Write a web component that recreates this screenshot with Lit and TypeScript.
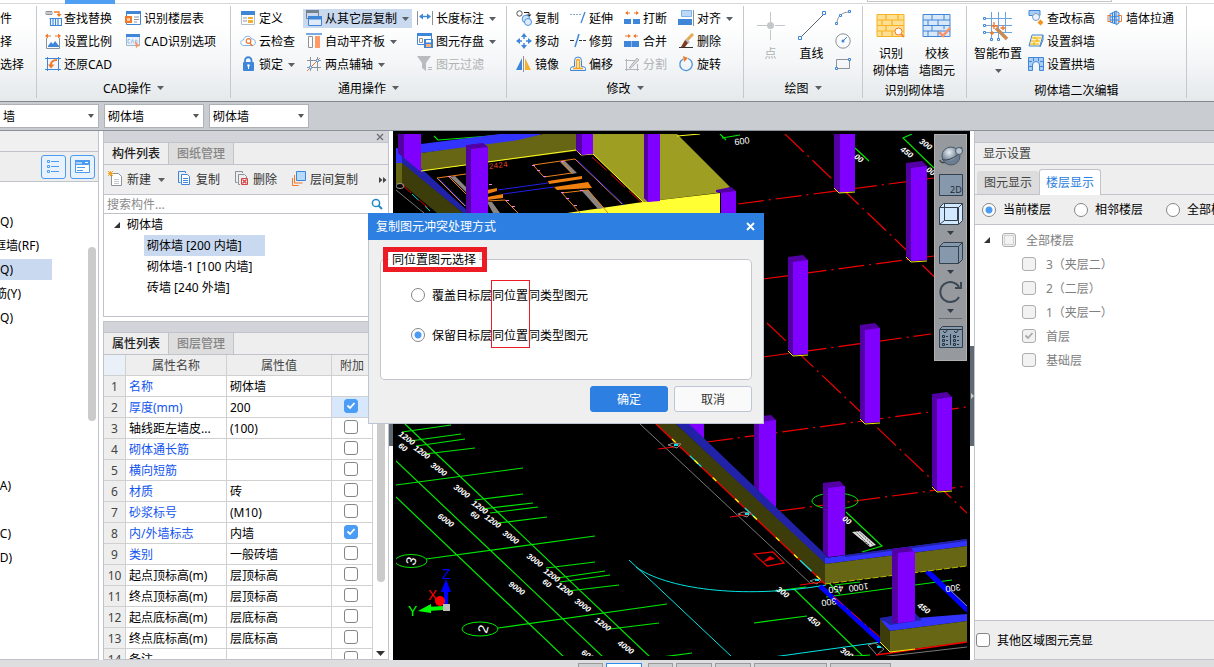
import { LitElement, html, css, svg, nothing } from "lit";
import { customElement } from "lit/decorators.js";
import { classMap } from "lit/directives/class-map.js";
import { styleMap } from "lit/directives/style-map.js";

const B = "#3f86d8";
const O = "#f0792a";
const G = "#8b9299";

const icons: Record<string, unknown> = {
  findReplace: svg`<path d="M1 1.500h6v3H1zM3 1v4M5 1v4" fill="none" stroke=${G}/><path d="M9 2h5v3" fill="none" stroke=${O} stroke-width="1.300"/><path d="M11.500 4h5L14 7z" fill=${O}/><path d="M5.500 8.500h11v7h-11zM4.500 8.500h12M8 9v6M10.500 9v6M13 9v6" fill="none" stroke=${B} stroke-width="1.200"/>`,
  scale: svg`<path d="M1 3h5M10 3h5" stroke=${O}/><path d="M0 3l3-2.500v5zM16 3l-3-2.500v5z" fill=${O}/><path d="M1.500 5v10.500h13V5" fill="none" stroke=${G}/><path d="M3 13l3-4 2 2 2-3 4 5v1H3z" fill=${B}/>`,
  restore: svg`<path d="M2.500 1v14M13.500 1v14M0 2.500h16M0 13.500h16" stroke=${B} fill="none"/><path d="M6 11c-1-5 2-7 6-7" fill="none" stroke=${O} stroke-width="2"/><path d="M3 8.500h6.500L6 12.500z" fill=${O}/>`,
  floorTable: svg`<path d="M1.500 1.500h14v13h-14z" fill="#fff" stroke=${B}/><path d="M1 1h15v3H1z" fill=${B}/><path d="M0 6h7v7H0z" fill=${O}/><path d="M2 8h3v3H2z" fill="#ffd2b0"/><path d="M9 7h5M9 9.500h5M9 12h3" stroke=${G}/>`,
  cadOpts: svg`<path d="M1.500 1.500h13v11h-13z" fill="#e9f2fc" stroke="#9db6cf"/><path d="M1 1h14v3H1z" fill=${B}/><path d="M5 6.500H3v3.500h2M6 10.500l1.500-4 1.500 4M10.500 7v3h1q1.500-1.500 0-3z" fill="none" stroke="#8fb4dc" stroke-width=".8"/><path d="M10 8l5 5-2.500.5-1.500 2z" fill="#f79468"/>`,
  define: svg`<path d="M1.500 1.500h13v13h-13z" fill="#fff" stroke="#b4bec8"/><path d="M1 1h14v4H1z" fill=${B}/><path d="M3 8h4M3 11h4" stroke=${G}/><path d="M8 7h5v2H8zM8 10h5v3H8z" fill="#f5b12d"/>`,
  cloud: svg`<path d="M4 12.500C-.5 12.500 0 7 3.500 7 4 2.500 10.500 2 11.500 6c5-.5 5 6.500 1 6.500z" fill="#fff" stroke="#7db1ea"/><circle cx="8.500" cy="8" r="2.300" fill="none" stroke=${O} stroke-width="1.200"/><path d="M10 10l2.500 3" stroke=${O} stroke-width="1.300"/>`,
  lock: svg`<path d="M5 7V4.500a3 3 0 0 1 6.500 0V7" fill="none" stroke=${B} stroke-width="1.800"/><rect x="3" y="6" width="11" height="9" rx="1" fill=${B}/><circle cx="8.500" cy="9.500" r="1.300" fill="#fff"/><path d="M8 10h1v3H8z" fill="#fff"/>`,
  copyLayer: svg`<path d="M.5.500h12v8H.5z" fill="#c9daf0" stroke="#75828e"/><path d="M0 0h13v3H0z" fill="#75828e"/><path d="M2.500 6.500h13v9h-13z" fill="#dfeafa" stroke=${B}/><path d="M2 6h14v3.500H2z" fill=${B}/>`,
  slab: svg`<path d="M0 1h16" stroke=${B} stroke-width="1.400"/><path d="M2.500 3.500h4v11h-4z" fill="#fff" stroke=${G}/><path d="M9 3h5v12H9z" fill="#ff9a66"/>`,
  auxAxis: svg`<path d="M4.500 1v14M11.500 1v14M1 4.500h14M1 11.500h14" stroke=${G}/><path d="M1 15L14 2" stroke=${O}/><circle cx="4.500" cy="11.500" r="1.300" fill="#fff" stroke=${B}/><circle cx="11.500" cy="4.500" r="1.300" fill="#fff" stroke=${B}/>`,
  dimension: svg`<path d="M.5 1v14M15.500 1v14" stroke=${G}/><path d="M3 6.500h10" stroke=${B} stroke-width="1.400"/><path d="M2 6.500l4-3v6zM14 6.500l-4-3v6z" fill=${B}/>`,
  saveElem: svg`<path d="M.5.500h14v11H.5z" fill="#fff" stroke=${B}/><path d="M0 0h15v3H0z" fill=${B}/><path d="M2.500 5.500h3v4h-3z" fill="none" stroke=${G}/><path d="M7 6h9v9H7z" fill=${B}/><path d="M9 7h5v2.500H9z" fill="#fff"/><path d="M9 11h5v3H9z" fill="#ffb070"/>`,
  filter: svg`<path d="M0 0h14L9 7v8l-4-3V7z" fill="#b9bcbf"/><path d="M11 11.500h4M11 13.500h4" stroke="#b9bcbf"/>`,
  copy: svg`<circle cx="3.500" cy="3.500" r="2.700" fill="#fff" stroke="#555"/><path d="M8 2.500h5v2" fill="none" stroke="#222"/><path d="M10.500 4.500h5L13 7z" fill="#222"/><circle cx="10" cy="9" r="3.800" fill="#cfe4fb" stroke="#4e93da"/><circle cx="12" cy="12" r="3.500" fill="#dcecfc" stroke="#4e93da"/>`,
  move: svg`<path d="M8 0l3 4H5zM8 16l3-4H5zM0 8l4-3v6zM16 8l-4-3v6z" fill=${B}/><path d="M8 3v3M8 10v3M3 8h3M10 8h3" stroke=${B} stroke-width="1.400"/>`,
  mirror: svg`<path d="M6 2v12H0z" fill=${B}/><path d="M7.500 0v16" stroke=${G}/><path d="M9 2v12h6z" fill="#f5b12d"/>`,
  extend: svg`<path d="M0 4.500h11" stroke="#7fa9d6" stroke-dasharray="2 1"/><path d="M15 2L11 13" stroke=${B} stroke-width="1.300"/>`,
  trim: svg`<path d="M0 7.500h4" stroke="#333"/><path d="M9 7.500h7" stroke="#333" stroke-dasharray="3 1"/><path d="M9 1L5 14" stroke=${B} stroke-width="1.500"/>`,
  offset: svg`<path d="M.5 14.500h15v-2q0-2-4-2V4.500a3.500 3.500 0 0 0-7 0v6q-4 0-4 2z" fill="none" stroke=${B}/><path d="M3 12.500h10M6.500 12V5a1.500 1.500 0 0 1 3 0v7" fill="none" stroke="#f5a51d" stroke-width="1.500"/>`,
  breakIt: svg`<path d="M0 9h7v5H0zM9 9h7v5H9z" fill=${B}/><path d="M3 3h3M10 3h3" stroke=${O}/><path d="M1 3l3-2v4zM15 3l-3-2v4z" fill=${O}/>`,
  merge: svg`<path d="M0 8h15v6H0z" fill=${B}/><path d="M7.500 8v6" stroke="#8fbcf0"/><path d="M1 3h4M10 3h4" stroke=${O}/><path d="M7 3L4 1v4zM9 3l3-2v4z" fill=${O}/>`,
  split: svg`<path d="M1 4.500h10M1 13.500h14M2.500 3v12M13.500 8v7" stroke="#b3b6b9"/><path d="M5 12L13 2l2 2-8 8z" fill="#d5d6d8" stroke="#b3b6b9"/>`,
  align: svg`<path d="M3.500.500h10v6h-10z" fill="#bcd8f7" stroke="#7fb0e6"/><path d="M0 9h14v6H0z" fill=${B}/><path d="M15.500 0v16" stroke=${G}/>`,
  erase: svg`<path d="M15 1L8 8" stroke="#e5a95a" stroke-width="3"/><path d="M9 6l3 3-2 2-3-3z" fill="#bbb"/><path d="M7 7l3 3-3 4H3z" fill="#7d3a22"/><path d="M1 14.500h14" stroke="#333"/>`,
  rotate: svg`<path d="M10 2.500a6.200 6.200 0 1 1-5 .5" fill="none" stroke="#4e93da" stroke-width="1.300"/><path d="M5 0l5 2-4 4z" fill=${O}/>`,
  arc: svg`<path d="M2 13C2 7 7 2 14 2" fill="none" stroke=${G}/><path d="M.5 12.500h2v2h-2zM4.500 4.500h2v2h-2zM13.500.500h2v2h-2z" fill="#fff" stroke=${B}/>`,
  circle: svg`<circle cx="8" cy="8" r="7.200" fill="none" stroke=${G}/><path d="M8 8l4-4" stroke=${B}/><circle cx="8" cy="8" r="1.500" fill=${B}/>`,
  rect: svg`<path d="M1.500 3.500h13v9h-13z" fill="none" stroke=${G}/><path d="M.5 11.500h2v2h-2zM13.500 2.500h2v2h-2z" fill="#fff" stroke=${B}/>`,
  elevation: svg`<path d="M1 .5h11v5H9l-2 3-2-3H1z" fill="#a9cdf4" stroke=${B}/><circle cx="8" cy="7" r="3.500" fill="#eaf3fc" stroke="#7a9cc0"/><path d="M12.500 9.500l3 3-3 3-3-3z" fill="#f5911d"/>`,
  slope: svg`<path d="M4 2h11l-3 11H1z" fill="#fff3c8" stroke=${B}/><path d="M4 5h9M3 8h9M2 11h9M7 4v2M9 6v3M6 9v3" stroke="#f0b000" stroke-width="1.200"/><path d="M15 2v5l-3 7" fill="none" stroke=${B}/>`,
  arch: svg`<path d="M.5 1.500h15v13h-4V9a3.500 3.500 0 0 0-7 0v5.500h-4z" fill="#a9cdf4" stroke=${B}/><path d="M0 5.500h4M0 10.500h4M12 5.500h4M12 10.500h4M5.500 1v4M10.500 1v4" stroke=${B}/>`,
  through: svg`<path d="M3 4l6-3v13l-6-2zM9 1l3 2v10l-3 2" fill="#cfe4fb" stroke=${B}/><path d="M5.500 3v10M7.500 2v11M3 7l9-1M3 10h9" stroke=${B}/><path d="M1 5.500h3M1 5v7M1 11.500h3M11 5.500h3.500v6H11" fill="none" stroke=${O}/>`,
  newItem: svg`<path d="M3.500 2.500h7l3 3v9h-10z" fill="#fff" stroke=${G}/><path d="M6 8.500h5M6 10.500h5M6 12.500h5" stroke="#c5c9cd"/><path d="M2.500 0v5M0 2.500h5M0 0l5 5M5 0L0 5" stroke="#f5a51d"/>`,
  copyDoc: svg`<path d="M8.500 2V.5h-7v11h2" fill="none" stroke=${B}/><path d="M4.500 3.500h6l2 2v8h-8z" fill="#fff" stroke=${B}/><path d="M6 7.500h5M6 9.500h5M6 11.500h5" stroke=${B}/>`,
  delDoc: svg`<path d="M8.500 2V.5h-7v11h2" fill="none" stroke=${G}/><path d="M6 13.500H4.500v-10h6l2 2V7" fill="none" stroke=${G}/><path d="M7.500 7.500h6v6h-6z" fill="#fff" stroke="#d04545"/><path d="M8.500 8.500l4 4M12.500 8.500l-4 4" stroke="#d04545" stroke-width="1.400"/>`,
  layerCopy: svg`<path d="M5.500.500h9v9h-9z" fill="#b6dafc" stroke=${B}/><path d="M3.500 4v8h8" fill="none" stroke=${O}/><path d="M1.500 7v7.500h6" fill="none" stroke=${O}/>`,
};

const big: Record<string, unknown> = {
  point: svg`<path d="M14.500 1v10M14.500 19v10M1 14.500h10M19 14.500h10" stroke="#c4c7c9"/><circle cx="14.500" cy="14.500" r="3.500" fill="#c4c7c9"/>`,
  line: svg`<path d="M4 26L26 4" stroke="#596570"/><path d="M1.500 25.500h3v3h-3zM25.500.500h3v3h-3z" fill="#fff" stroke=${B}/>`,
  brick: svg`<path d="M1 3.500h27v22H1z" fill="#ffdf94" stroke="#f5b31f"/><path d="M1 9h27M1 14.500h27M1 20h27M10 3v6M22 3v6M6 9v5.500M16 9v5.500M10 14.500V20M6 20v5M16 20v5" stroke="#f5b31f" stroke-width="1.200"/><circle cx="22.500" cy="20.500" r="3.500" fill="#fff" stroke=${O}/><path d="M25 23l3 3" stroke=${O} stroke-width="1.500"/>`,
  check: svg`<path d="M1 3.500h27v22H1z" fill="#d9e8f8" stroke=${B}/><path d="M1 9h27M1 14.500h27M1 20h27M10 3v6M22 3v6M6 9v5.500M16 9v5.500M10 14.500V20M6 20v5M16 20v5M22 14.500V18" stroke=${B}/><path d="M17 21l4 4 7-8" fill="none" stroke="#f79468" stroke-width="2.500"/>`,
  smart: svg`<path d="M8.500 1v26M15.500 1v26M22.500 1v20M2 7.500h27M2 14.500h27M2 21.500h27" stroke="#6ba4e2"/><path d="M.5 6.500h2v2h-2zM.5 13.500h2v2h-2zM.5 20.500h2v2h-2zM7.500 27.500h2v2h-2zM14.500 27.500h2v2h-2z" fill="#fff" stroke=${B}/><path d="M13 17l11 11" stroke="#c98a54" stroke-width="3.500"/><path d="M11 11v7M8 15h7M20 14v5M17.500 17h5M9 20v4M7 22h4" stroke=${O} stroke-width="1.300"/>`,
};

const ico = (name: string) => html`<svg class="ico" width="17" height="17" viewBox="0 0 17 17" aria-hidden="true">${icons[name]}</svg>`;
const caret = html`<svg class="caret" width="7" height="4" viewBox="0 0 7 4" aria-hidden="true"><path d="M0 0h7L3.500 4z" fill="#5b5f63"/></svg>`;

interface Cmd { t?: string; i?: string; drop?: boolean; off?: boolean; on?: boolean }
const cmd = (c: Cmd) => html`<button class=${classMap({ cmd: true, on: !!c.on })} ?disabled=${!!c.off} aria-label=${c.t ? nothing : c.i}>
  ${c.i ? ico(c.i) : nothing}${c.t ? html`<span>${c.t}</span>` : nothing}${c.drop ? caret : nothing}</button>`;
const bigCmd = (name: string, lines: string[], drop = false, off = false) => html`<button class="big" ?disabled=${off}>
  <svg width="30" height="30" viewBox="0 0 30 30" aria-hidden="true">${big[name]}</svg>
  ${lines.map((l) => html`<span>${l}</span>`)}${drop ? html`<span>${caret}</span>` : nothing}</button>`;

const cadCmds: Cmd[] = [
  { t: "查找替换", i: "findReplace" }, { t: "识别楼层表", i: "floorTable" },
  { t: "设置比例", i: "scale" }, { t: "CAD识别选项", i: "cadOpts" },
  { t: "还原CAD", i: "restore" },
];
const commonCmds: Cmd[] = [
  { t: "定义", i: "define" }, { t: "从其它层复制", i: "copyLayer", drop: true, on: true }, { t: "长度标注", i: "dimension", drop: true },
  { t: "云检查", i: "cloud" }, { t: "自动平齐板", i: "slab", drop: true }, { t: "图元存盘", i: "saveElem", drop: true },
  { t: "锁定", i: "lock", drop: true }, { t: "两点辅轴", i: "auxAxis", drop: true }, { t: "图元过滤", i: "filter", off: true },
];
const editCmds: Cmd[] = [
  { t: "复制", i: "copy" }, { t: "延伸", i: "extend" }, { t: "打断", i: "breakIt" }, { t: "对齐", i: "align", drop: true },
  { t: "移动", i: "move" }, { t: "修剪", i: "trim" }, { t: "合并", i: "merge" }, { t: "删除", i: "erase" },
  { t: "镜像", i: "mirror" }, { t: "偏移", i: "offset" }, { t: "分割", i: "split", off: true }, { t: "旋转", i: "rotate" },
];

interface Prop { n: string; v: string; blue?: boolean; c?: boolean | null }
const props: Prop[] = [
  { n: "名称", v: "砌体墙", blue: true, c: null },
  { n: "厚度(mm)", v: "200", blue: true, c: true },
  { n: "轴线距左墙皮...", v: "(100)" },
  { n: "砌体通长筋", v: "", blue: true },
  { n: "横向短筋", v: "", blue: true },
  { n: "材质", v: "砖", blue: true },
  { n: "砂浆标号", v: "(M10)", blue: true },
  { n: "内/外墙标志", v: "内墙", blue: true, c: true },
  { n: "类别", v: "一般砖墙", blue: true },
  { n: "起点顶标高(m)", v: "层顶标高" },
  { n: "终点顶标高(m)", v: "层顶标高" },
  { n: "起点底标高(m)", v: "层底标高" },
  { n: "终点底标高(m)", v: "层底标高" },
  { n: "备注", v: "" },
];

// Label text with the visible extent left by the horizontal scroll of the tree.
const navRows: [string, number][] = [
  ["Q)", 13], ["框墙(RF)", 39], ["Q)", 13], ["筋(Y)", 21], ["Q)", 13], ["", 0], ["", 0], ["", 0],
  ["", 0], ["", 0], ["", 0], ["A)", 11], ["", 0], ["C)", 11], ["D)", 12],
];

// Column prism in the model view: left, right, top and bottom edges.
const pillar = (x: number, r: number, top: number, bottom: number, side = 5) => svg`
  <path d="M${x} ${top + 2}L${r - 5} ${top}L${r} ${top + 5}V${bottom - 1}L${x + side} ${bottom}L${x} ${bottom - 5}z" fill="#5200a3"/>
  <path d="M${x + side} ${top + 7}L${r} ${top + 5}V${bottom - 1}L${x + side} ${bottom}z" fill="#8000ff"/>`;
const foot = (x: number, r: number, y: number) => svg`<path d="M${x} ${y - 5}L${x + 5} ${y}L${r} ${y - 1}" fill="none" stroke="#e8e800"/>`;

const dims: [number, number, string][] = [
  [407, 438, "1200"], [403, 447, "60"], [422, 452, "1200"], [439, 469, "3000"], [462, 491, "3000"], [480, 507, "1200"],
  [475, 515, "60"], [493, 521, "1200"], [511, 537, "3000"], [535, 560, "3000"], [552, 575, "1200"], [547, 583, "60"],
  [565, 589, "1200"], [583, 605, "3000"], [603, 624, "1200"], [626, 647, "4000"], [446, 520, "6000"], [517, 588, "9000"],
  [588, 655, "600"], [907, 152, "450"], [926, 144, "300"], [859, 158, "00"], [931, 171, "00"], [783, 592, "300"],
  [814, 621, "450"], [847, 653, "300"], [924, 608, "450"], [847, 520, "00"],
];

const greens = [
  "M405 424L650 657", "M396 461L603 657", "M396 497L564 657", "M396 485L523 468", "M426 559L595 536", "M498 628L667 604",
  "M402 432L451 425", "M410 441L461 434", "M416 446L465 439", "M425 454L475 448", "M475 500L523 494", "M482 509L533 503",
  "M490 513L538 507", "M498 523L547 517", "M546 568L595 562", "M557 578L605 571", "M560 582L610 575", "M568 591L619 585",
  "M610 629L659 623", "M662 657L692 653", "M754 623L807 616", "M794 589L864 657", "M775 591L806 587", "M826 597L952 580",
  "M835 585L860 582", "M829 583L840 594", "M846 512L882 546L862 552", "M855 148L869 161", "M912 134L903 138L934 168",
  "M434 136L438 140L503 135", "M720 134L726 140M722 138L740 135", "M843 657L870 655",
];

const scene = svg`
<g clip-path="url(#view)">
  <g fill="none" stroke="#f00000" stroke-width="1.200" stroke-dasharray="26 5 2 5">
    <path d="M785 134L967 308"/><path d="M738 204L934 178"/><path d="M763 279L934 256"/><path d="M763 357L931 334"/>
    <path d="M767 323L967 513"/><path d="M707 442L967 407"/><path d="M779 511L967 486"/>
  </g>
  <path d=${greens.join("")} fill="none" stroke="#00e800" stroke-width="1.200"/>
  <g fill="none" stroke="#00e800"><ellipse cx="411" cy="561" rx="16" ry="6.500"/><ellipse cx="480" cy="629" rx="18" ry="7"/><ellipse cx="835" cy="501" rx="23" ry="8"/></g>
  <g fill="none" stroke="#00e5e5"><path d="M629 560L732 657"/><path d="M636 567C665 588 740 600 826 585"/><path d="M773 657L881 642"/></g>
  <path d="M421 144L500 134H540L543 139L421 153z" fill="#3333ff"/>
  <path d="M421 153L543 137L576 134V151L421 171z" fill="#666614"/>
  <path d="M543 134H576V135L543 139L510 142z" fill="#666614"/>
  <path d="M396 148L421 152V170L402 163H396z" fill="#3333ff"/>
  <path d="M396 163H402V184H396z" fill="#666614"/>
  <path d="M402 155L412 160L470 213H463L402 164z" fill="#2222a8"/>
  <path d="M402 163L463 213H437L402 184z" fill="#3d3d0c"/>
  <path d="M593 134H677L730 187L717 193L643 202L593 154z" fill="#9e9e22"/>
  <path d="M567 213L643 202L720 193V213z" fill="#ffff33"/>
  <path d="M421 171L576 150L581 155L593 154L643 202M677 136L700 134" fill="none" stroke="#ffff20"/>
  <path d="M592 157L641 202" stroke="#e00000" stroke-dasharray="20 5"/>
  <path d="M450 177L455 176L466 187V192zM560 162L565 161L577 173L572 174zM582 191L588 190L604 208L598 209zM487 202H492L500 213H493z" fill="#8c8480"/>
  <g fill="none" stroke="#e8801c"><path d="M466 174L437 178L465 206M441 181L463 203M449 177L466 194"/><path d="M533 165L575 159L622 204M533 165L544 177L572 173L562 162"/><path d="M562 193L588 190L608 213M562 193L580 213M487 201L505 200L518 213"/></g>
  <g stroke="#2020e8"><path d="M498 190L548 183M503 194L554 187M577 160L624 205M439 179L466 206"/></g>
  <path d="M548 181L582 176V179L549 184zM554 187L588 182L592 188L557 190zM487 190L497 188V191L487 194zM487 197L503 194V198L487 200z" fill="#f08010"/>
  <path d="M532 165h3v1h-3zM537 170h3v1h-3zM543 176h3v1h-3zM561 161h3v1h-3zM561 192h3v1h-3zM566 198h3v1h-3zM574 205h3v1h-3zM448 176h3v1h-3zM489 184h3v1h-3zM506 200h3v1h-3zM512 206h3v1h-3zM580 190h3v1h-3z" fill="#f080f0"/>
  <text x="489" y="169" class="red" transform="rotate(-7 489 169)">2424</text>
  <path d="M396 190L424 213" stroke="#777"/><path d="M402 185L434 213" stroke="#f00000" stroke-dasharray="12 10"/><path d="M412 194L430 211" stroke="#00e5e5" stroke-dasharray="9 9"/>
  <ellipse cx="400" cy="186" rx="4" ry="2.500" fill="none" stroke="#999"/>
  <path d="M398 134H421V172L404 158L398 150z" fill="#8000ff"/><path d="M398 134H404V158L398 153z" fill="#5200a3"/>
  <path d="M466 145L483 143L488 147V213H466z" fill="#5200a3"/><path d="M471 149L488 147V213H471z" fill="#8000ff"/>
  <path d="M576 134H593V154L582 155L576 150z" fill="#8000ff"/><path d="M576 134H582V155L576 150z" fill="#5200a3"/>
  <path d="M644 134H660V201L648 202L644 198z" fill="#8000ff"/><path d="M644 134H648V202L644 198z" fill="#5200a3"/>
  <path d="M716 190L731 187L736 191V213H721V193L716 192z" fill="#5200a3"/><path d="M721 193L736 191V213H721z" fill="#8000ff"/>
  <path d="M834 134H855V191L840 193L834 187z" fill="#8000ff"/><path d="M834 134H840V193L834 187z" fill="#5200a3"/>
  ${foot(834, 855, 193)}
  ${pillar(906, 927, 161, 261)}${foot(906, 927, 262)}
  ${pillar(788, 808, 255, 355)}${foot(788, 808, 356)}
  ${pillar(860, 880, 323, 423)}${foot(860, 880, 424)}
  ${pillar(932, 952, 392, 491)}${foot(932, 952, 492)}
  ${pillar(754, 776, 415, 511)}
  <path d="M685 424H704V440z" fill="#8000ff"/>
  <path d="M676 424H689L828 557L825 564z" fill="#2222a8"/>
  <path d="M656 424H676L825 563V584z" fill="#3d3d0c"/>
  <path d="M640 424L811 584" stroke="#777"/>
  <path d="M656 424L825 584" stroke="#f00000" stroke-width="1.300"/>
  <path d="M668 435L825 584" stroke="#00e5e5" stroke-width="1.300" stroke-dasharray="0 30 16 30"/>
  <path d="M672 439L825 584" stroke="#ffff00" stroke-width="1.300" stroke-dasharray="5 26 5 20"/>
  <g fill="none" stroke="#888"><path d="M738 514l5-2 8 1-4 4zM668 445l5-2 8 1-4 4zM810 581l5-2 6 1-4 4zM868 645l7-2 9 6-7 6z"/></g>
  <path d="M730 517L752 514M658 449L674 447M800 585L822 582M754 554L773 552L784 563L767 566z" fill="none" stroke="#f00000" stroke-width="1.200"/>
  <path d="M770 556L775 559L763 562z" fill="#f00000"/>
  <path d="M745 513h4v2h-4zM674 444h4v2h-4zM815 579h4v2h-4zM877 646h4v2h-4z" fill="#00e5e5"/>
  <path d="M820 586L881 642" stroke="#0000ff" stroke-width="5"/><path d="M833 596L881 638" stroke="#f00000" stroke-dasharray="14 4 2 4"/>
  <path d="M927 571L969 611" stroke="#0000ff" stroke-width="5.500"/><path d="M950 590L967 606" stroke="#888"/>
  <path d="M825 558L967 539V546L825 564z" fill="#3333ff"/><path d="M845 555L967 539V541L845 557z" fill="#2222a8"/>
  <path d="M825 564L967 546V566L825 584z" fill="#666614"/><path d="M825 584L967 566" stroke="#b8b800" stroke-dasharray="6 2"/>
  <path d="M823 483L840 481L845 487V555L828 557L823 552z" fill="#5200a3"/><path d="M828 488L845 486V555L828 557z" fill="#8000ff"/>
  <path d="M880 618L892 616V623L880 622z" fill="#2222a8"/>
  <path d="M880 621L967 614V621L890 631z" fill="#3333ff"/><path d="M880 618L915 613L922 620L890 625z" fill="#2222a8"/>
  <path d="M880 619L890 631V652L880 642z" fill="#3d3d0c"/><path d="M890 631L967 621V642L890 652z" fill="#666614"/>
  <path d="M876 655L967 642" stroke="#f00000" stroke-width="1.500"/><path d="M880 642L890 652L915 649" fill="none" stroke="#f0f000"/><path d="M880 657L967 647" stroke="#777"/>
  <path d="M892 549L910 547L915 553V621L898 623H892z" fill="#5200a3"/><path d="M898 553L915 551V621L898 623z" fill="#8000ff"/>
  ${dims.map(([x, y, t]) => svg`<text x=${x} y=${y + 3} class="dim" text-anchor="middle" transform="rotate(36 ${x} ${y})">${t}</text>`)}
  <path d="M852 532l8-1 16 14-6 2z" fill="#ddd"/><path d="M855 531l15 15M852 534l17 11M858 531l16 15" stroke="#000" stroke-width=".6" stroke-dasharray="2 1"/>
  <text x="749" y="137" class="lbl" transform="rotate(172 749 137)">009</text>
  <text x="843" y="585" class="lbl" transform="rotate(172 843 585)">450</text>
  <text x="868" y="583" class="lbl" transform="rotate(172 868 583)">1000</text>
  <text x="836" y="598" class="lbl" transform="rotate(172 836 598)">300</text>
  <text x="960" y="584" class="lbl" transform="rotate(172 960 584)">300</text>
  <text x="411" y="566" class="axis" fill="#fff" text-anchor="middle" transform="rotate(-75 411 561)">3</text>
  <text x="483" y="634" class="axis" fill="#fff" text-anchor="middle" transform="rotate(-75 483 629)">2</text>
  <path d="M446 606V588" stroke="#0000ff" stroke-width="4"/><path d="M446 579L451 592H441z" fill="#0000ff"/>
  <path d="M443 608L428 609" stroke="#00ff00" stroke-width="4"/><path d="M418 611L431 604V613z" fill="#00ff00"/>
  <circle cx="440" cy="601" r="5" fill="#ff0000"/><path d="M443 604h7v7h-7z" fill="#bdbdbd"/>
  <text x="442" y="579" class="axis" fill="#0000ff">Z</text><text x="428" y="600" class="axis" fill="#ff0000">X</text><text x="408" y="616" class="axis" fill="#00ff00">Y</text>
</g>`;

@customElement("app-root")
export class AppRoot extends LitElement {
  static styles = css`
    :host { display: flex; flex-direction: column; height: 100vh; overflow: hidden; position: relative; background: #fff; color: #000;
      font: 12px/17px "Noto Sans", "Noto Sans CJK SC", sans-serif; }
    * { box-sizing: border-box; }
    button, input, select { font: inherit; color: inherit; margin: 0; }
    button { background: none; border: 0; padding: 0; white-space: nowrap; }
    svg { display: block; flex: none; }

    .tabstrip { flex: none; height: 4px; border-bottom: 1px solid #d6d8da; display: flex; padding-left: 65px; }
    .tabmark { width: 50px; height: 4px; background: #4f9ff5; }
    .finder { width: 245px; height: 2px; margin-left: 752px; border: 1px solid #c5c5c5; border-top: 0; }

    .ribbon { flex: none; height: 98px; display: flex; border-bottom: 1px solid #81878d; background: linear-gradient(#fff 20%, #f4f6f7 60%, #e5e9eb); }
    .group { flex: none; margin: 2px 0 3px; border-right: 1px solid #c6c9cc; display: flex; flex-direction: column; overflow: hidden; padding-top: 1px; }
    .g-pick { width: 37px; } .g-cad { width: 194px; } .g-common { width: 276px; } .g-edit { width: 237px; }
    .g-draw { width: 119px; } .g-detect { width: 104px; } .g-wall { width: 220px; }
    .cmds { display: grid; grid-auto-rows: 23px; align-items: center; height: 69px; padding-left: 6px; justify-content: start; justify-items: start; }
    .g-pick .cmds { padding: 0; }
    .g-cad .cmds { grid-template-columns: 80px 100px; padding-left: 5px; }
    .g-common .cmds { grid-template-columns: 66px 111px 90px; }
    .g-edit .cmds { grid-template-columns: repeat(4, 54px); }
    .row { display: flex; height: 69px; padding-left: 5px; }
    .row .cmds { padding-left: 0; }
    .g-draw .row { padding-left: 6px; }
    .g-wall .row { padding-left: 4px; }
    .g-wall .cmds { grid-template-columns: 79px 80px; }
    .cmd { height: 19px; display: flex; align-items: center; padding: 0 3px; }
    .cmd .ico { margin-right: 2px; }
    .cmd .caret { margin-left: 5px; }
    .cmd.on { background: #c9d9ef; }
    .g-pick .cmd { padding: 0; }
    button:disabled { color: #b0b2b4; }
    .big { width: 41px; padding-top: 4px; display: flex; flex-direction: column; align-items: center; align-self: flex-start; }
    .big > svg { margin-bottom: 4px; }
    .big span { height: 17px; display: flex; align-items: center; }
    .g-detect .big { width: 46px; }
    .g-wall .big { width: 54px; }
    .gname { flex: 1; display: flex; align-items: center; justify-content: center; gap: 6px; padding-top: 2px; }
    .gname.plain { padding-top: 6px; }

    .combos { flex: none; height: 29px; display: flex; align-items: center; gap: 5px; background: #c9ccd0; border-bottom: 1px solid #8b9099; }
    .combos select { appearance: none; width: 100px; height: 24px; border: 1px solid #aeb1b5; border-radius: 0; padding: 0 3px;
      background: #fff url("data:image/svg+xml,%3Csvg xmlns='http://www.w3.org/2000/svg' width='6' height='4'%3E%3Cpath d='M0 0h6L3 4z' fill='%23555'/%3E%3C/svg%3E") no-repeat right 4px center; }
    .combos select:first-child { width: 99px; border-left: 0; }

    .work { flex: 1; min-height: 0; display: grid; grid-template-columns: 99px 4px 286px 4px minmax(0, 1fr) 4px 240px; grid-template-rows: 100%; }
    .split { background: #fff; padding-top: 215px; }
    .split div { height: 100px; background: #5f6a74; display: flex; align-items: center; }

    .nav { display: flex; flex-direction: column; border-right: 1px solid #c0c3ca; border-bottom: 1px solid #c0c3ca; min-height: 0; }
    .navhead { height: 21px; background: #f0f0f0; border-bottom: 1px solid #c0c3ca; }
    .navbar { height: 30px; background: #eee; border-bottom: 1px solid #c0c3ca; display: flex; gap: 4px; align-items: center; justify-content: flex-end; padding-right: 3px; }
    .navbar button { width: 25px; height: 24px; border: 1px solid #4b9bf0; border-radius: 3px; background: #e8f2fd; display: grid; place-items: center; }
    .navbody { flex: 1; display: flex; justify-content: space-between; min-height: 0; }
    .navlist { list-style: none; margin: 0; padding: 27px 0 0; width: 52px; }
    .navlist li { height: 24px; display: flex; align-items: center; }
    .navlist span { display: flex; justify-content: flex-end; white-space: nowrap; overflow: hidden; height: 21px; align-items: center; }
    .navlist li.sel { background: linear-gradient(#c9d9ef, #c9d9ef) center / 100% 21px no-repeat; }
    .navthumb { width: 8px; height: 174px; margin: 65px 2px 0 0; border-radius: 4px; background: #cbcbcb; }

    .mid { display: flex; flex-direction: column; gap: 4px; min-height: 0; }
    .panel { border: 1px solid #c0c3ca; border-top: 0; display: flex; flex-direction: column; min-height: 0; }
    .comp { flex: none; height: 186px; }
    .attrs { flex: 1; border-top: 1px solid #c0c3ca; }
    .strip { flex: none; height: 12px; background: #d3d4d9; border-bottom: 1px solid #c0c3ca; display: flex; justify-content: flex-end; align-items: center; padding-right: 4px; }
    .attrs .strip { height: 11px; }
    .tabs { flex: none; height: 22px; display: flex; background: #eee; border-bottom: 1px solid #c0c3ca; }
    .tabs button { width: 65px; border-right: 1px solid #c0c3ca; font-weight: 500; color: #222; }
    .tabs .idle { background: #dedede; color: #868686; }
    .tools { flex: none; height: 30px; display: flex; align-items: center; background: #eee; border-bottom: 1px solid #c0c3ca; padding: 0 1px 0 4px; color: #333; }
    .tools .cmd { padding: 0; }
    .tools .cmd .caret { margin-left: 7px; }
    .tools .cmd:nth-child(2) { margin-left: 12px; }
    .tools .cmd:nth-child(3), .tools .cmd:nth-child(4) { margin-left: 14px; }
    .more { margin-left: auto; }
    .search { flex: none; height: 19px; display: flex; align-items: center; border-bottom: 1px solid #c0c3ca; padding: 0 5px 0 3px; }
    .search input { flex: 1; min-width: 0; border: 0; padding: 0; outline: 0; height: 17px; }
    .search input::placeholder { color: #8a8a8a; opacity: 1; }
    .tree { list-style: none; margin: 0; padding: 0; }
    .tree li { display: flex; align-items: center; height: 21px; }
    .root { padding-left: 10px; gap: 7px; }
    .leaf { padding-left: 40px; }
    .leaf span { height: 21px; padding: 2px 3px; width: 121px; }
    .leaf.sel span { background: #c9d9ef; }

    .gridwrap { flex: 1; min-height: 0; display: flex; overflow: hidden; }
    table { table-layout: fixed; width: 269px; border-collapse: separate; border-spacing: 0; align-self: flex-start; }
    .c0 { width: 22px; } .c1 { width: 101px; } .c2 { width: 105px; } .c3 { width: 41px; }
    th, td { height: 21px; padding: 0; border-right: 1px solid #d0d0d0; border-bottom: 1px solid #d0d0d0; font-weight: 400; line-height: 17px; white-space: nowrap; }
    thead th { background: #eee; color: #444; }
    thead th:first-child { background: #e9f0f7; }
    tbody th { background: #eee; color: #444; }
    td { padding-left: 3px; }
    td.blue { color: #1255ee; }
    td.tick { padding: 0 3px 3px 0; text-align: center; line-height: 0; }
    td.tick.cur { background: #d7e8fc; }
    .vbar { flex: 1; display: flex; flex-direction: column; align-items: center; justify-content: space-between; padding-bottom: 3px; }
    .vthumb { width: 8px; height: 227px; background: #cbcbcb; border-radius: 4px; }

    input[type="checkbox"], input[type="radio"] { appearance: none; flex: none; width: 14px; height: 14px; border: 1px solid #858585; border-radius: 3px; background: #fff center no-repeat; }
    input[type="checkbox"]:checked { border-color: #4b9cf5; background-color: #4b9cf5;
      background-image: url("data:image/svg+xml,%3Csvg xmlns='http://www.w3.org/2000/svg' width='10' height='8'%3E%3Cpath d='M1.500 3.500l2.500 2.500 4.500-5' fill='none' stroke='white' stroke-width='1.800'/%3E%3C/svg%3E"); }
    input[type="radio"] { border-radius: 50%; }
    input[type="radio"]:checked { background-image: radial-gradient(circle, #4b9cf5 3px, transparent 4px); }

    .canvas { background: #000; position: relative; min-width: 0; overflow: hidden; }
    .canvas > svg { width: 100%; height: 100%; }
    .dim { font: italic bold 8px "Liberation Sans", sans-serif; fill: #fff; }
    .lbl { font: 9px "Liberation Sans", sans-serif; fill: #fff; }
    .red { font: 8px "Liberation Mono", monospace; fill: #e04020; }
    .axis { font: 14px "Liberation Sans", sans-serif; }
    .viewbar { position: absolute; top: 3px; right: 3px; width: 33px; height: 227px; background: #96999d; border: 1px solid #aeb0b2; display: flex; flex-direction: column; align-items: center; padding-top: 8px; }
    .viewbar button { height: 24px; margin-top: 1px; }
    .viewbar button:nth-child(2), .viewbar button:nth-child(3) { margin-top: 5px; }
    .viewbar .dd { height: 14px; display: grid; place-items: center; }
    .viewbar hr { width: 23px; border: 0; border-top: 1px solid #696e73; margin: 0 0 5px; }

    .disp { display: flex; flex-direction: column; border-left: 1px solid #c0c3ca; border-bottom: 1px solid #c0c3ca; min-height: 0; overflow: hidden; }
    .disp h2 { flex: none; margin: 0; height: 22px; padding-left: 8px; font-size: 12px; line-height: 22px; font-weight: 400; background: #eee; color: #444; border-bottom: 1px solid #c0c3ca; }
    .dtabs { flex: none; height: 30px; background: #eee; border-bottom: 1px solid #c0c3ca; display: flex; align-items: flex-end; padding-left: 2px; }
    .dtabs button { width: 62px; height: 23px; background: #dcdcdc; border-radius: 3px 3px 0 0; color: #444; }
    .dtabs .act { height: 26px; background: #fff; border: 1px solid #c0c3ca; border-bottom: 0; color: #2b80e0; margin-bottom: -1px; }
    .scope { flex: none; height: 30px; background: #eee; border-bottom: 1px solid #c0c3ca; display: flex; align-items: center; gap: 23px; padding-left: 7px; white-space: nowrap; }
    label { display: inline-flex; align-items: center; gap: 7px; white-space: nowrap; }
    .floors { list-style: none; margin: 0; padding: 3px 0 0; flex: 1; color: #808080; }
    .floors li { height: 24px; display: flex; align-items: center; padding-left: 47px; }
    .floors li:first-child { padding-left: 9px; gap: 12px; }
    .floors label { gap: 10px; }
    .floors input { border-color: #adadad; background-color: #f2f2f2; }
    .floors .mixed { box-shadow: inset 0 0 0 1px #f2f2f2, inset 0 0 0 2px #d0d0d0; }
    .floors input:checked { border-color: #adadad; background-color: #f2f2f2;
      background-image: url("data:image/svg+xml,%3Csvg xmlns='http://www.w3.org/2000/svg' width='10' height='8'%3E%3Cpath d='M1.500 3.500l2.500 2.500 4.500-5' fill='none' stroke='%23aaa' stroke-width='1.800'/%3E%3C/svg%3E"); }
    .dfoot { flex: none; height: 39px; background: #eee; border-top: 1px solid #c0c3ca; display: flex; align-items: center; padding-left: 1px; }

    .status { flex: none; height: 7px; background: #dedee0; display: flex; gap: 3px; padding: 3px 0 0 578px; overflow: hidden; }
    .status i { flex: none; height: 12px; border: 1px solid #9a9a9c; background: #cfcfd1; }
    .status .cur { background: #fff; border-color: #2d8cf0; margin-right: 3px; }

    .dialog { position: absolute; left: 368px; top: 213px; width: 396px; border: 1px solid #bcc6d2; border-top: 0; background: #efefef; display: flex; flex-direction: column; }
    .dtitle { height: 27px; margin: 0 -1px; background: #2d80e2; color: #fff; display: flex; align-items: center; justify-content: space-between; padding: 0 9px 0 8px; }
    .choices { margin: 11px 11px 0; height: 129px; border: 1px solid #c3c6cc; border-radius: 4px; padding: 0 0 0 30px; min-width: 0;
      background: #fff; display: flex; flex-direction: column; }
    .choices legend { margin-left: -22px; padding: 0 3px; line-height: 17px; background: #fff; }
    .choices label { height: 40px; }
    .choices label:first-of-type { margin-top: 7px; }
    .actions { display: flex; justify-content: flex-end; gap: 6px; padding: 6px 11px 11px; }
    .actions button { width: 78px; height: 26px; border-radius: 3px; border: 1px solid #bcc6d6; background: #fafafa; color: #333; }
    .actions .ok { background: #2d80e2; border-color: #2d80e2; color: #fff; }
    .mark { position: absolute; pointer-events: none; border: 1px solid #ed1c24; }
    .mark-title { left: 14px; top: 34px; width: 104px; height: 25px; border-width: 5px; }
    .mark-word { left: 122px; top: 67px; width: 39px; height: 68px; }
  `;

  render() {
    return html`
      <div class="tabstrip"><div class="tabmark"></div><div class="finder"></div></div>
      <header class="ribbon">
        <section class="group g-pick"><div class="cmds">${["件", "择", "选择"].map((t) => cmd({ t }))}</div></section>
        <section class="group g-cad"><div class="cmds">${cadCmds.map(cmd)}</div><div class="gname">CAD操作${caret}</div></section>
        <section class="group g-common"><div class="cmds">${commonCmds.map(cmd)}</div><div class="gname">通用操作${caret}</div></section>
        <section class="group g-edit"><div class="cmds">${editCmds.map(cmd)}</div><div class="gname">修改${caret}</div></section>
        <section class="group g-draw">
          <div class="row">${bigCmd("point", ["点"], false, true)}${bigCmd("line", ["直线"])}
            <div class="cmds">${["arc", "circle", "rect"].map((i) => cmd({ i }))}</div></div>
          <div class="gname">绘图${caret}</div>
        </section>
        <section class="group g-detect">
          <div class="row">${bigCmd("brick", ["识别", "砌体墙"])}${bigCmd("check", ["校核", "墙图元"])}</div>
          <div class="gname plain">识别砌体墙</div>
        </section>
        <section class="group g-wall">
          <div class="row">${bigCmd("smart", ["智能布置"], true)}
            <div class="cmds">${cmd({ t: "查改标高", i: "elevation" })}${cmd({ t: "墙体拉通", i: "through" })}
              ${cmd({ t: "设置斜墙", i: "slope" })}<span></span>${cmd({ t: "设置拱墙", i: "arch" })}</div></div>
          <div class="gname plain">砌体墙二次编辑</div>
        </section>
      </header>
      <div class="combos">${["墙", "砌体墙", "砌体墙"].map((t) => html`<select aria-label=${t}><option>${t}</option></select>`)}</div>
      <main class="work">
        ${this.nav()}
        <div></div>
        <div class="mid">${this.components()}${this.attributeTable()}</div>
        <div class="split"><div></div></div>
        ${this.modelView()}
        <div class="split"><div><svg width="4" height="6" viewBox="0 0 4 6"><path d="M1 0l3 3-3 3z" fill="#c9ccd0"/></svg></div></div>
        ${this.display()}
      </main>
      <footer class="status">${[25, 36, 25, 36, 36, 73, 61].map((w, i) => html`<i class=${i === 1 ? "cur" : ""} style=${styleMap({ width: `${w}px` })}></i>`)}</footer>
      ${this.dialog()}
    `;
  }

  private nav() {
    return html`<aside class="nav">
      <div class="navhead"></div>
      <div class="navbar">
        <button aria-label="列表"><svg width="15" height="15" viewBox="0 0 15 15"><path d="M1.500 1.500h2v2h-2zM1.500 6.500h2v2h-2zM1.500 11.500h2v2h-2zM5 2.500h8M5 7.500h8M5 12.500h8" fill="none" stroke="#4b9bf0"/></svg></button>
        <button aria-label="窗口"><svg width="17" height="15" viewBox="0 0 17 15"><path d="M1.500 1.500h14v12h-14z" fill="#fff" stroke="#4b9bf0"/><path d="M1 1h15v5H1z" fill="#4b9bf0"/><path d="M3 3v2M5 3v2M7 3v2M11 3.500h3" stroke="#fff"/><path d="M3 8.500h8M3 11.500h6" stroke="#4b9bf0"/></svg></button>
      </div>
      <div class="navbody">
        <ul class="navlist">${navRows.map(([t, w], i) => html`<li class=${i === 2 ? "sel" : ""}><span style=${styleMap({ width: `${w}px` })}>${t}</span></li>`)}</ul>
        <div class="navthumb"></div>
      </div>
    </aside>`;
  }

  private components() {
    return html`<section class="panel comp">
      <div class="strip"><svg width="8" height="8" viewBox="0 0 8 8"><path d="M1 1l6 6M7 1L1 7" stroke="#6b6f75" stroke-width="1.400"/></svg></div>
      <div class="tabs"><button>构件列表</button><button class="idle">图纸管理</button></div>
      <div class="tools">
        ${cmd({ t: "新建", i: "newItem", drop: true })}${cmd({ t: "复制", i: "copyDoc" })}${cmd({ t: "删除", i: "delDoc" })}${cmd({ t: "层间复制", i: "layerCopy" })}
        <svg class="more" width="8" height="6" viewBox="0 0 8 6"><path d="M0 0l3.500 3L0 6zM4 0l3.500 3L4 6z" fill="#444"/></svg>
      </div>
      <div class="search"><input placeholder="搜索构件..." aria-label="搜索构件" />
        <svg width="12" height="12" viewBox="0 0 12 12"><circle cx="5" cy="5" r="3.600" fill="none" stroke="#1f88c9" stroke-width="1.500"/><path d="M7.500 7.500l3.500 3.500" stroke="#1f88c9" stroke-width="2"/></svg></div>
      <ul class="tree">
        <li class="root"><svg width="6" height="6" viewBox="0 0 6 6"><path d="M6 0v6H0z" fill="#333"/></svg>砌体墙</li>
        <li class="leaf sel"><span>砌体墙 [200 内墙]</span></li>
        <li class="leaf"><span>砌体墙-1 [100 内墙]</span></li>
        <li class="leaf"><span>砖墙 [240 外墙]</span></li>
      </ul>
    </section>`;
  }

  private attributeTable() {
    return html`<section class="panel attrs">
      <div class="strip"></div>
      <div class="tabs"><button>属性列表</button><button class="idle">图层管理</button></div>
      <div class="gridwrap">
        <table>
          <colgroup><col class="c0" /><col class="c1" /><col class="c2" /><col class="c3" /></colgroup>
          <thead><tr><th></th><th>属性名称</th><th>属性值</th><th>附加</th></tr></thead>
          <tbody>${props.map((p, i) => html`<tr>
            <th>${i + 1}</th><td class=${p.blue ? "blue" : ""}>${p.n}</td><td>${p.v}</td>
            <td class=${classMap({ tick: true, cur: i === 1 })}>${p.c === null ? nothing : html`<input type="checkbox" aria-label=${p.n} .checked=${!!p.c} />`}</td>
          </tr>`)}</tbody>
        </table>
        <div class="vbar"><div class="vthumb"></div><svg width="9" height="5" viewBox="0 0 9 5"><path d="M0 0h9L4.500 5z" fill="#333"/></svg></div>
      </div>
    </section>`;
  }

  private modelView() {
    const dd = html`<span class="dd"><svg width="7" height="4" viewBox="0 0 7 4"><path d="M0 0h7L3.500 4z" fill="#2f3b47"/></svg></span>`;
    const vi = (label: string, body: unknown) => html`<button aria-label=${label}><svg width="24" height="24" viewBox="0 0 24 24">${body}</svg></button>`;
    return html`<section class="canvas">
      <svg viewBox="393 131 577 529" preserveAspectRatio="xMidYMid slice" aria-hidden="true">
        <defs><clipPath id="view"><rect x="396" y="134" width="571" height="522"/></clipPath></defs>${scene}
      </svg>
      <div class="viewbar">
        ${vi("动态观察", svg`<defs><radialGradient id="ball" cx=".4" cy=".3"><stop offset="0" stop-color="#e8eef4"/><stop offset="1" stop-color="#6b7d90"/></radialGradient></defs><path d="M1 16c0 4 8 3 14-1s9-9 7-12" fill="none" stroke="#39434e" stroke-width="1.300"/><circle cx="12" cy="12" r="9" fill="url(#ball)" stroke="#4a5968"/><path d="M3 15c3 3 14-1 18-7" fill="none" stroke="#39434e"/><circle cx="20" cy="7" r="3.500" fill="#b9c5d0" stroke="#4a5968"/>`)}
        ${vi("2D", svg`<path d="M.5 1.500h23v21H.5z" fill="#8698ab" stroke="#33404d"/><text x="11" y="20" font-size="9" fill="#1f2a35" font-family="Noto Sans">2D</text>`)}
        ${vi("线框", svg`<path d="M.5 5.500l4-4h19v17l-4 4H.5z" fill="#d3e9ff" stroke="#33404d"/><path d="M.5 5.500h19v17M19.500 5.500l4-4M5.500 1.500v17h13V6M5.500 18.500l-5 4" fill="none" stroke="#33404d"/>`)}
        ${dd}
        ${vi("实体", svg`<path d="M.5 5.500l4-4h19v17l-4 4H.5z" fill="#8698ab" stroke="#33404d"/><path d="M.5 5.500h19v17M19.500 5.500l4-4" fill="none" stroke="#33404d"/>`)}
        ${dd}
        ${vi("旋转", svg`<path d="M20 17a10 10 0 1 1 0-10" fill="none" stroke="#3b4754" stroke-width="2"/><path d="M22 2v6h-6" fill="none" stroke="#3b4754" stroke-width="2"/>`)}
        ${dd}
        <hr />
        ${vi("图元显示", svg`<path d="M.5 4.500l3-3h20v21H.5z" fill="#8698ab" stroke="#33404d"/><path d="M1 4.500h22M11.500 9v11M4 6l2 2 3-4M15 6l2 2 3-4" fill="none" stroke="#26323d"/><path d="M3.500 10.500h2v2h-2zM3.500 14.500h2v2h-2zM3.500 18.500h2v2h-2zM14.500 10.500h2v2h-2zM14.500 14.500h2v2h-2zM14.500 18.500h2v2h-2zM7 11.500h2M7 15.500h2M7 19.500h2M18 11.500h2M18 15.500h2M18 19.500h2" fill="none" stroke="#26323d"/>`)}
      </div>
    </section>`;
  }

  private display() {
    return html`<aside class="disp">
      <div class="strip"></div>
      <h2>显示设置</h2>
      <div class="dtabs"><button>图元显示</button><button class="act">楼层显示</button></div>
      <div class="scope">${["当前楼层", "相邻楼层", "全部楼层"].map((t, i) => html`<label><input type="radio" name="scope" .checked=${i === 0} />${t}</label>`)}</div>
      <ul class="floors">
        <li><svg width="6" height="6" viewBox="0 0 6 6"><path d="M6 0v6H0z" fill="#333"/></svg><label><input class="mixed" type="checkbox" disabled />全部楼层</label></li>
        ${["3（夹层二）", "2（二层）", "1（夹层一）", "首层", "基础层"].map((t) => html`<li><label><input type="checkbox" disabled .checked=${t === "首层"} />${t}</label></li>`)}
      </ul>
      <div class="dfoot"><label><input type="checkbox" />其他区域图元亮显</label></div>
    </aside>`;
  }

  private dialog() {
    return html`<div class="dialog" role="dialog" aria-label="复制图元冲突处理方式">
      <div class="dtitle"><span>复制图元冲突处理方式</span><button aria-label="关闭"><svg width="9" height="9" viewBox="0 0 9 9"><path d="M1 1l7 7M8 1L1 8" stroke="#fff" stroke-width="1.800"/></svg></button></div>
      <fieldset class="choices">
        <legend>同位置图元选择</legend>
        <label><input type="radio" name="mode" />覆盖目标层同位置同类型图元</label>
        <label><input type="radio" name="mode" .checked=${true} />保留目标层同位置同类型图元</label>
      </fieldset>
      <div class="actions"><button class="ok">确定</button><button>取消</button></div>
      <div class="mark mark-title"></div>
      <div class="mark mark-word"></div>
    </div>`;
  }
}
